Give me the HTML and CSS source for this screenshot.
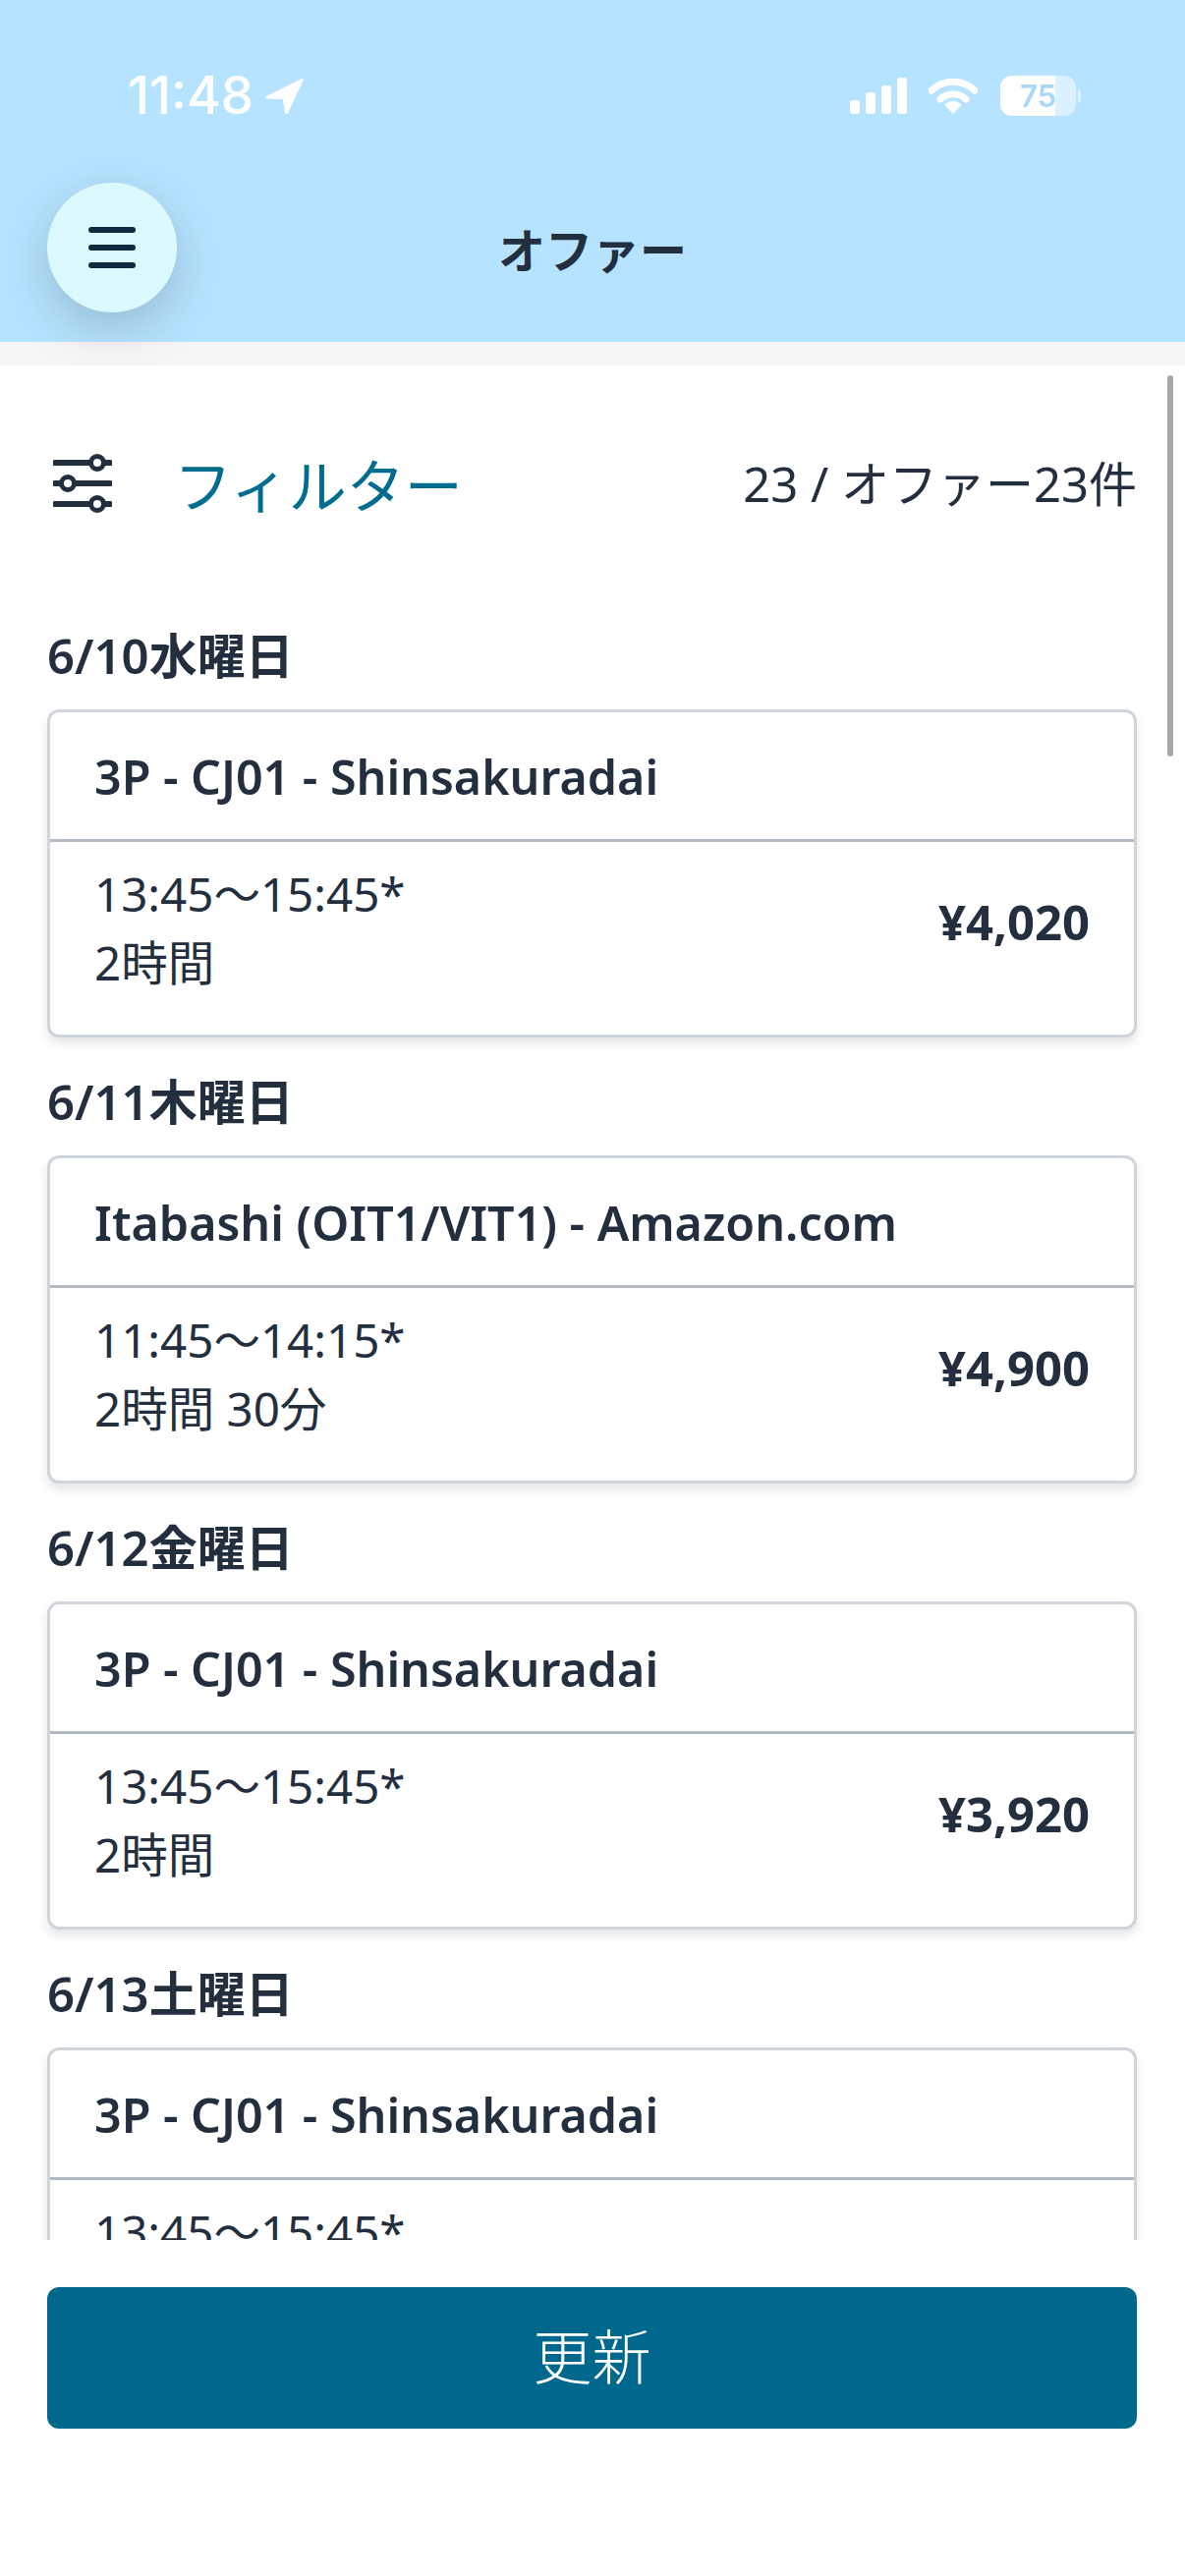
FILE: index.html
```html
<!DOCTYPE html>
<html lang="ja">

<head>
    <meta charset="UTF-8">
    <meta name="viewport" content="width=device-width, initial-scale=1.0">
    <title>オファー</title>
    <link rel="stylesheet" href="styles.css">
</head>

<body>
    <div class="page">
        <header class="app-header">
            <div class="status-bar">
                <div class="status-left">
                    <span class="clock">11:48</span>
                    <svg class="arrow-icon" viewBox="0 0 40 38" width="40" height="38">
                        <path d="M38 1 L2 19 Q0 21 3 21.500 L19 22 L21 36 Q22 38 24 36 L39.500 3 Q40 0 38 1 Z" fill="#fff" />
                    </svg>
                </div>
                <div class="status-right">
                    <svg class="signal-icon" viewBox="0 0 58 37" width="58" height="37">
                        <rect x="0" y="23" width="10" height="14" rx="3" fill="#fff" />
                        <rect x="16" y="15" width="10" height="22" rx="3" fill="#fff" />
                        <rect x="32" y="8" width="10" height="29" rx="3" fill="#fff" />
                        <rect x="48" y="0" width="10" height="37" rx="3" fill="#fff" />
                    </svg>
                    <svg class="wifi-icon" viewBox="0 0 50 37" width="50" height="37">
                        <path d="M3 13 A32 32 0 0 1 47 13" fill="none" stroke="#fff" stroke-width="7" stroke-linecap="round" />
                        <path d="M12 22 A19 19 0 0 1 38 22" fill="none" stroke="#fff" stroke-width="7" stroke-linecap="round" />
                        <path d="M25 37 L16 27.500 A13 13 0 0 1 34 27.500 Z" fill="#fff" />
                    </svg>
                    <div class="battery">75</div>
                </div>
            </div>
            <div class="title-row">
                <button class="menu-button" type="button" aria-label="メニュー">
                    <svg viewBox="0 0 48 42" width="48" height="42">
                        <path d="M3 3 H45 M3 21 H45 M3 39 H45" fill="none" stroke="#0f2a3f" stroke-width="6" stroke-linecap="round" />
                    </svg>
                </button>
                <h1 class="page-title">オファー</h1>
            </div>
        </header>

        <div class="band"></div>

        <main class="offers">
            <div class="filter-row">
                <div class="filter-link">
                    <svg class="filter-icon" viewBox="0 0 60 60" width="60" height="60">
                        <path d="M2 9 H58 M2 30 H58 M2 51 H58" fill="none" stroke="#232f3e" stroke-width="6" stroke-linecap="round" />
                        <circle cx="45" cy="9" r="6.500" fill="#fff" stroke="#232f3e" stroke-width="5" />
                        <circle cx="15" cy="30" r="6.500" fill="#fff" stroke="#232f3e" stroke-width="5" />
                        <circle cx="45" cy="51" r="6.500" fill="#fff" stroke="#232f3e" stroke-width="5" />
                    </svg>
                    <span class="filter-label">フィルター</span>
                </div>
                <span class="offer-count">23 / オファー23件</span>
            </div>

            <section class="day">
                <h2 class="day-title">6/10水曜日</h2>
                <div class="card">
                    <div class="card-head">3P - CJ01 - Shinsakuradai</div>
                    <div class="card-body">
                        <div class="times">
                            <p>13:45～15:45*</p>
                            <p>2時間</p>
                        </div>
                        <span class="price">¥4,020</span>
                    </div>
                </div>
            </section>

            <section class="day">
                <h2 class="day-title">6/11木曜日</h2>
                <div class="card">
                    <div class="card-head">Itabashi (OIT1/VIT1) - Amazon.com</div>
                    <div class="card-body">
                        <div class="times">
                            <p>11:45～14:15*</p>
                            <p>2時間 30分</p>
                        </div>
                        <span class="price">¥4,900</span>
                    </div>
                </div>
            </section>

            <section class="day">
                <h2 class="day-title">6/12金曜日</h2>
                <div class="card">
                    <div class="card-head">3P - CJ01 - Shinsakuradai</div>
                    <div class="card-body">
                        <div class="times">
                            <p>13:45～15:45*</p>
                            <p>2時間</p>
                        </div>
                        <span class="price">¥3,920</span>
                    </div>
                </div>
            </section>

            <section class="day">
                <h2 class="day-title">6/13土曜日</h2>
                <div class="card">
                    <div class="card-head">3P - CJ01 - Shinsakuradai</div>
                    <div class="card-body">
                        <div class="times">
                            <p>13:45～15:45*</p>
                            <p>2時間</p>
                        </div>
                        <span class="price">¥4,020</span>
                    </div>
                </div>
            </section>

            <div class="scroll-thumb"></div>
        </main>

        <footer class="app-footer">
            <button class="refresh-button" type="button">更新</button>
        </footer>
    </div>
</body>

</html>
```

FILE: styles.css
```css
* {
    box-sizing: border-box;
}

body {
    margin: 0;
    background-color: #fff;
    color: #232f3e;
    font-family: 'Noto Sans', 'Noto Sans CJK JP', sans-serif;
}

p,
h1,
h2 {
    margin: 0;
}

.page {
    display: flex;
    flex-direction: column;
    width: 1206px;
    height: 2622px;
    overflow: hidden;
}

/* header */

.app-header {
    position: relative;
    z-index: 2;
    flex: none;
    height: 348px;
    padding: 77px 48px 0;
    background-color: #b6e3ff;
}

.status-bar {
    display: flex;
    justify-content: space-between;
    align-items: center;
    height: 41px;
    margin-right: 63px;
    margin-left: 82px;
}

.status-left {
    display: flex;
    align-items: center;
    gap: 11px;
}

.clock {
    color: #fff;
    font-family: 'Inter', sans-serif;
    font-size: 53px;
    font-weight: 500;
    line-height: 41px;
}

.status-right {
    display: flex;
    align-items: center;
    gap: 22px;
}

.battery {
    position: relative;
    width: 77px;
    height: 41px;
    margin-left: 1px;
    border-radius: 12px;
    background: linear-gradient(90deg, #fff 73%, rgba(255, 255, 255, 0.5) 73%);
    color: #a9d8f7;
    font-family: 'Inter', sans-serif;
    font-size: 31px;
    font-weight: 600;
    line-height: 41px;
    text-align: center;
}

.battery::after {
    content: "";
    position: absolute;
    top: 14px;
    right: -5px;
    width: 3px;
    height: 13px;
    border-radius: 0 3px 3px 0;
    background-color: rgba(255, 255, 255, 0.6);
}

.title-row {
    position: relative;
    display: flex;
    justify-content: center;
    align-items: center;
    height: 132px;
    margin-top: 68px;
}

.menu-button {
    position: absolute;
    top: 0;
    left: 0;
    display: flex;
    justify-content: center;
    align-items: center;
    width: 132px;
    height: 132px;
    padding: 0;
    border: none;
    border-radius: 50%;
    background-color: #dbf9ff;
    box-shadow: 0 16px 50px rgba(0, 0, 0, 0.18);
}

.page-title {
    font-family: 'Noto Sans CJK JP', sans-serif;
    font-size: 48px;
    font-weight: 700;
    line-height: 60px;
}

.band {
    flex: none;
    height: 24px;
    background-color: #f6f6f8;
}

/* offers list */

.offers {
    position: relative;
    flex: none;
    height: 1908px;
    padding: 0 49px 0 48px;
    overflow: hidden;
}

.filter-row {
    display: flex;
    justify-content: space-between;
    align-items: center;
    height: 236px;
    padding-top: 4px;
}

.filter-link {
    display: flex;
    align-items: center;
    gap: 63px;
    padding-left: 6px;
}

.filter-label {
    color: #006d8f;
    font-family: 'Noto Sans CJK JP', sans-serif;
    font-size: 59px;
    font-weight: 400;
    line-height: 80px;
}

.offer-count {
    font-size: 49px;
    line-height: 64px;
}

.day {
    height: 454px;
}

.day-title {
    height: 114px;
    padding-top: 29px;
    font-size: 49px;
    font-weight: 600;
    line-height: 60px;
}

.card {
    height: 334px;
    border: 3px solid #d0d5dc;
    border-radius: 12px;
    background-color: #fff;
    box-shadow: 0 6px 10px rgba(35, 47, 62, 0.12);
}

.card-head {
    display: flex;
    align-items: center;
    height: 132px;
    padding: 0 45px;
    border-bottom: 3px solid #b4bac1;
    font-size: 48.400px;
    font-weight: 600;
}

.card-body {
    display: flex;
    justify-content: space-between;
    align-items: center;
    height: 196px;
    padding: 0 45px 20px;
}

.times {
    font-size: 47.500px;
    line-height: 70px;
}

.price {
    margin-bottom: 14px;
    font-size: 49px;
    font-weight: 700;
}

.scroll-thumb {
    position: absolute;
    top: 10px;
    right: 12px;
    width: 6px;
    height: 388px;
    border-radius: 3px;
    background-color: #a8a8a8;
}

/* footer */

.app-footer {
    flex: 1;
    padding: 48px 49px 0 48px;
}

.refresh-button {
    display: block;
    width: 100%;
    height: 144px;
    padding-bottom: 10px;
    border: none;
    border-radius: 12px;
    background-color: #00688d;
    color: #fff;
    font-family: 'Noto Sans CJK JP', sans-serif;
    font-size: 60px;
    font-weight: 300;
}
```
